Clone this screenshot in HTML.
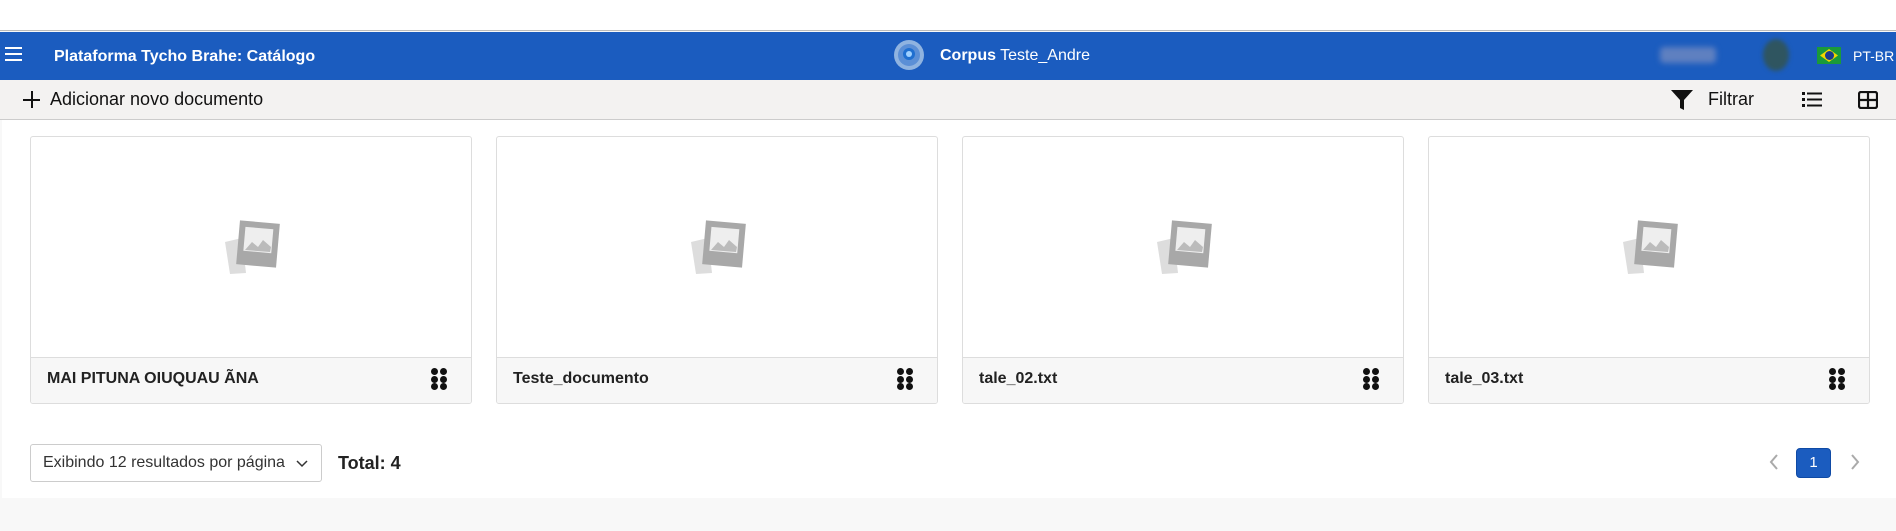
<!DOCTYPE html>
<html><head><meta charset="utf-8"><style>
*{box-sizing:border-box;margin:0;padding:0}
body{width:1896px;height:531px;background:#f8f8f8;font-family:"Liberation Sans",Arial,sans-serif;position:relative;overflow:hidden}
.abs{position:absolute}
.top{left:0;top:0;width:1896px;height:31px;background:#fff;border-bottom:1px solid #bbb}
.nav{left:0;top:32px;width:1896px;height:48px;background:#1b5cbf;color:#fff}
.tool{left:0;top:80px;width:1896px;height:40px;background:#f3f2f1;border-bottom:1px solid #ccc}
.main{left:2px;top:120px;width:1894px;height:378px;background:#fff}
.card{top:136px;width:442px;height:268px;border:1px solid #ddd;border-radius:3px;background:#fff;overflow:hidden}
.cf{position:absolute;left:0;bottom:0;width:100%;height:46px;background:#f7f7f7;border-top:1px solid #ddd;font-weight:bold;font-size:16px;color:#222;padding:12px 0 0 16px}
.dots{position:absolute;right:24px;top:10px;width:16px;height:22px}
.dots i{position:absolute;width:7px;height:7px;border-radius:50%;background:#111}
.ph{position:absolute;left:193px;top:83px}
</style></head><body>
<div class="abs top"></div>
<div class="abs nav">
 <div class="abs" style="left:5px;top:15px;width:17px;height:2px;background:#fff;box-shadow:0 6px 0 #fff,0 12px 0 #fff"></div>
 <div class="abs" style="left:54px;top:16px;font-size:16px;font-weight:bold">Plataforma Tycho Brahe: Catálogo</div>
 <svg class="abs" style="left:892px;top:6px" width="34" height="34" viewBox="0 0 34 34"><circle cx="17" cy="17" r="15" fill="#8fb3e0"/><circle cx="17" cy="17" r="11" fill="#5b8fd6"/><circle cx="17" cy="16" r="6" fill="#1f6fd0"/><circle cx="17" cy="16" r="3" fill="#9ed0ff"/></svg>
 <div class="abs" style="left:940px;top:15px;font-size:16px"><b>Corpus</b> Teste_Andre</div>
 <div class="abs" style="left:1660px;top:15px;width:56px;height:16px;background:#5f80c0;filter:blur(3px);border-radius:4px"></div>
 <div class="abs" style="left:1763px;top:7px;width:26px;height:32px;border-radius:50%;background:#2f5560;filter:blur(2px)"></div>
 <div class="abs" style="left:1817px;top:15px;width:24px;height:17px;background:#1a9a3a"><div class="abs" style="left:3px;top:2px;width:18px;height:13px;background:#f2d500;clip-path:polygon(50% 0,100% 50%,50% 100%,0 50%)"></div><div class="abs" style="left:8px;top:4px;width:9px;height:9px;border-radius:50%;background:#1c3a8e"></div></div>
 <div class="abs" style="left:1853px;top:16px;font-size:14px">PT-BR</div>
</div>
<div class="abs tool">
 <div class="abs" style="left:23px;top:19px;width:17px;height:2px;background:#111"></div>
 <div class="abs" style="left:30.5px;top:11px;width:2px;height:17px;background:#111"></div>
 <div class="abs" style="left:50px;top:9px;font-size:18px;color:#111">Adicionar novo documento</div>
 <svg class="abs" style="left:1671px;top:10px" width="22" height="20" viewBox="0 0 22 20"><path d="M0 0H22L13 10V20L9 18V10Z" fill="#111"/></svg>
 <div class="abs" style="left:1708px;top:9px;font-size:18px;color:#111">Filtrar</div>
 <svg class="abs" style="left:1802px;top:12px" width="20" height="16"><g fill="#111"><rect x="0" y="0" width="3" height="3"/><rect x="5" y="0.5" width="15" height="2"/><rect x="0" y="6" width="3" height="3"/><rect x="5" y="6.5" width="15" height="2"/><rect x="0" y="12" width="3" height="3"/><rect x="5" y="12.5" width="15" height="2"/></g></svg>
 <svg class="abs" style="left:1858px;top:11px" width="20" height="18"><rect x="1" y="1" width="18" height="16" rx="2" fill="none" stroke="#111" stroke-width="2.2"/><path d="M10 1V17M1 9H19" stroke="#111" stroke-width="2.2"/></svg>
</div>
<div class="abs main"></div>

<div class="abs card" style="left:30px"><svg class="ph" width="58" height="54" viewBox="0 0 58 54"><path d="M1 22L18 18L22 53L6 54Z" fill="#ddd"/><rect x="14" y="2" width="40" height="44" fill="#a8a8a8" transform="rotate(5 34 24)"/><rect x="20" y="8" width="28" height="24" fill="#eee" transform="rotate(5 34 24)"/><path d="M21 30L28 22L34 27L39 20L47 27L46 32Z" fill="#bbb"/></svg><div class="cf">MAI PITUNA OIUQUAU ÃNA<div class="dots"><i style="left:0;top:0"></i><i style="left:9px;top:0"></i><i style="left:0;top:7.5px"></i><i style="left:9px;top:7.5px"></i><i style="left:0;top:15px"></i><i style="left:9px;top:15px"></i></div></div></div>
<div class="abs card" style="left:496px"><svg class="ph" width="58" height="54" viewBox="0 0 58 54"><path d="M1 22L18 18L22 53L6 54Z" fill="#ddd"/><rect x="14" y="2" width="40" height="44" fill="#a8a8a8" transform="rotate(5 34 24)"/><rect x="20" y="8" width="28" height="24" fill="#eee" transform="rotate(5 34 24)"/><path d="M21 30L28 22L34 27L39 20L47 27L46 32Z" fill="#bbb"/></svg><div class="cf">Teste_documento<div class="dots"><i style="left:0;top:0"></i><i style="left:9px;top:0"></i><i style="left:0;top:7.5px"></i><i style="left:9px;top:7.5px"></i><i style="left:0;top:15px"></i><i style="left:9px;top:15px"></i></div></div></div>
<div class="abs card" style="left:962px"><svg class="ph" width="58" height="54" viewBox="0 0 58 54"><path d="M1 22L18 18L22 53L6 54Z" fill="#ddd"/><rect x="14" y="2" width="40" height="44" fill="#a8a8a8" transform="rotate(5 34 24)"/><rect x="20" y="8" width="28" height="24" fill="#eee" transform="rotate(5 34 24)"/><path d="M21 30L28 22L34 27L39 20L47 27L46 32Z" fill="#bbb"/></svg><div class="cf">tale_02.txt<div class="dots"><i style="left:0;top:0"></i><i style="left:9px;top:0"></i><i style="left:0;top:7.5px"></i><i style="left:9px;top:7.5px"></i><i style="left:0;top:15px"></i><i style="left:9px;top:15px"></i></div></div></div>
<div class="abs card" style="left:1428px"><svg class="ph" width="58" height="54" viewBox="0 0 58 54"><path d="M1 22L18 18L22 53L6 54Z" fill="#ddd"/><rect x="14" y="2" width="40" height="44" fill="#a8a8a8" transform="rotate(5 34 24)"/><rect x="20" y="8" width="28" height="24" fill="#eee" transform="rotate(5 34 24)"/><path d="M21 30L28 22L34 27L39 20L47 27L46 32Z" fill="#bbb"/></svg><div class="cf">tale_03.txt<div class="dots"><i style="left:0;top:0"></i><i style="left:9px;top:0"></i><i style="left:0;top:7.5px"></i><i style="left:9px;top:7.5px"></i><i style="left:0;top:15px"></i><i style="left:9px;top:15px"></i></div></div></div>

<div class="abs" style="left:30px;top:444px;width:292px;height:38px;border:1px solid #ccc;border-radius:3px;font-size:16px;color:#333;padding:9px 0 0 12px">Exibindo 12 resultados por página
 <svg class="abs" style="left:265px;top:15px" width="12" height="8"><path d="M1 1L6 6L11 1" stroke="#333" stroke-width="1.5" fill="none"/></svg></div>
<div class="abs" style="left:338px;top:453px;font-size:18px;font-weight:bold;color:#222">Total: 4</div>
<svg class="abs" style="left:1769px;top:454px" width="10" height="16"><path d="M8 1L2 8L8 15" stroke="#aaa" stroke-width="2" fill="none"/></svg>
<div class="abs" style="left:1796px;top:448px;width:35px;height:30px;background:#1b5cbf;border:1px solid #0f4aa5;border-radius:4px;color:#fff;font-size:15px;text-align:center;line-height:28px">1</div>
<svg class="abs" style="left:1850px;top:454px" width="10" height="16"><path d="M2 1L8 8L2 15" stroke="#aaa" stroke-width="2" fill="none"/></svg>
</body></html>
